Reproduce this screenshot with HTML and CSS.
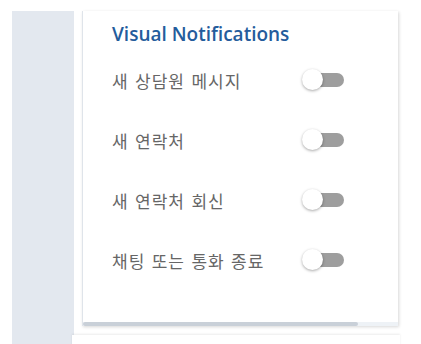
FILE: index.html
```html
<!DOCTYPE html>
<html lang="ko">
<head>
<meta charset="utf-8">
<link rel="stylesheet" href="styles.css">
</head>
<body>
<div class="page">
  <aside class="sidebar"></aside>
  <main class="content">
    <section class="card">
      <div class="card-body">
        <h2 class="title">Visual Notifications</h2>
        <div class="row"><span class="label">새 상담원 메시지</span><span class="switch"><span class="knob"></span></span></div>
        <div class="row"><span class="label">새 연락처</span><span class="switch"><span class="knob"></span></span></div>
        <div class="row"><span class="label">새 연락처 회신</span><span class="switch"><span class="knob"></span></span></div>
        <div class="row"><span class="label">채팅 또는 통화 종료</span><span class="switch"><span class="knob"></span></span></div>
      </div>
      <div class="hscroll"><div class="hthumb"></div></div>
    </section>
    <section class="card next"></section>
  </main>
</div>
</body>
</html>
```

FILE: styles.css
```css
html, body {
  margin: 0;
  padding: 0;
  background: #ffffff;
}
.page {
  display: flex;
  padding-top: 11px;
  padding-left: 12px;
  height: 333px;
  overflow: hidden;
}
.sidebar {
  width: 62px;
  background: #e3e8ef;
  flex: none;
}
.content {
  display: flex;
  flex-direction: column;
  padding-left: 8px;
  width: 316px;
}
.card {
  background: #ffffff;
  border-left: 1px solid #dfe4ea;
  box-shadow: 1px 1px 3px rgba(0, 0, 0, 0.16);
  width: 315px;
  flex: none;
}
.card-body {
  padding: 11px 54px 32px 29px;
}
.title {
  margin: 0 0 4px 0;
  font-family: "Open Sans", sans-serif;
  font-weight: 600;
  font-size: 19px;
  line-height: 24px;
  color: #245c9c;
}
.row {
  height: 60px;
  display: flex;
  align-items: center;
  justify-content: space-between;
}
.label {
  font-family: "Open Sans", "Noto Sans CJK KR", sans-serif;
  font-size: 17px;
  color: #666666;
  letter-spacing: 1px;
  word-spacing: 1px;
}
.switch {
  position: relative;
  width: 34px;
  height: 14px;
  border-radius: 7px;
  background: #9e9e9e;
}
.knob {
  position: absolute;
  left: -8px;
  top: -4px;
  width: 21px;
  height: 21px;
  border-radius: 50%;
  background: #ffffff;
  box-shadow: 0 1px 3px rgba(0, 0, 0, 0.35);
}
.hscroll {
  height: 4px;
  background: #eef2f6;
}
.hthumb {
  width: 275px;
  height: 4px;
  background: #c9d0d8;
  border-radius: 2px;
}
.next {
  margin-top: 9px;
  margin-left: -10px;
  width: 328px;
  height: 20px;
  border-left: none;
  box-shadow: 0 -1px 2px rgba(0, 0, 0, 0.08);
}
```
